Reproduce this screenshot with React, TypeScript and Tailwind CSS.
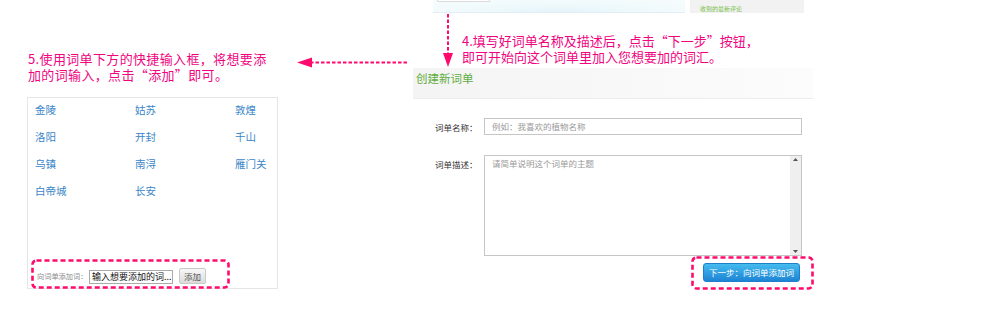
import React from "react";

const F = { fontFamily: '"Noto Sans CJK SC", "Noto Sans", sans-serif' };

function DashBox({ w, h, className }: { w: number; h: number; className: string }) {
  return (
    <svg className={className} width={w} height={h} viewBox={`0 0 ${w} ${h}`}>
      <rect
        x={1.5}
        y={1.5}
        width={w - 3}
        height={h - 3}
        rx={4}
        fill="none"
        stroke="#ff0a6c"
        strokeWidth={2.6}
        strokeDasharray="5 3"
      />
    </svg>
  );
}

const words = ["金陵", "姑苏", "敦煌", "洛阳", "开封", "千山", "乌镇", "南浔", "雁门关", "白帝城", "长安"];

export default function App() {
  return (
    <div className="relative w-[990px] h-[311px] bg-white overflow-hidden flex" style={F}>
      {/* Left column */}
      <div className="ml-[27px] w-[251px] flex flex-col">
        <div className="mt-[51px] pl-[1px] text-[13px] leading-[16px] tracking-[0.35px] text-[#f0047f] whitespace-nowrap">
          <div>5.使用词单下方的快捷输入框，将想要添</div>
          <div>加的词输入，点击“添加”即可。</div>
        </div>
        <div className="relative mt-[14px] h-[192px] border border-[#e6e6e6] flex flex-col">
          <div className="grid grid-cols-[100px_100px_50px] pl-[7px] pt-[3px]">
            {words.map((w) => (
              <div key={w} className="h-[27px] text-[10.5px] leading-[18px] text-[#3a86c8] whitespace-nowrap">
                {w}
              </div>
            ))}
          </div>
          <div className="mt-auto mb-[4px] ml-[9px] flex items-center h-[16px]">
            <span className="w-[52px] text-[7.2px] leading-[10px] text-[#8a8a8a] whitespace-nowrap">向词单添加词：</span>
            <div className="w-[84px] h-[14px] mt-[1px] border border-[#a9a9a9] bg-white px-[2px] text-[9px] leading-[12px] text-[#111] whitespace-nowrap overflow-hidden">
              输入想要添加的词...
            </div>
            <div className="ml-[6px] w-[27px] h-[16px] rounded-[2px] border border-[#c9c9c9] bg-gradient-to-b from-[#f7f7f7] to-[#dcdcdc] text-[8.5px] leading-[14px] text-[#555] text-center whitespace-nowrap">
              添加
            </div>
          </div>
          <DashBox w={199} h={30} className="absolute left-[3px] top-[161px]" />
        </div>
      </div>

      {/* Right column */}
      <div className="ml-[135px] w-[400px] flex flex-col">
        {/* top strip of previous screenshot */}
        <div className="ml-[20px] w-[371px] h-[13px] flex">
          <div className="relative w-[252px] h-[13px] border-b border-[#e3eef2] bg-[radial-gradient(ellipse_at_50%_120%,#dff3fa_0%,#eef9fc_45%,#f7fcfd_100%)]">
            <div className="absolute left-[4px] top-0 w-[53px] h-[2px] bg-white border-b border-x border-[#dcdcdc] rounded-b-[1px]" />
          </div>
          <div className="ml-[5px] w-[114px] h-[13px] bg-[#f2f2f2] pl-[10px] pt-[5px]">
            <div className="text-[6px] leading-[7px] text-[#78c04a] whitespace-nowrap">收到的最新评论</div>
          </div>
        </div>

        <div className="mt-[20px] ml-[49px] text-[13px] leading-[16px] text-[#f0047f] whitespace-nowrap">
          <div>4.填写好词单名称及描述后，点击“下一步”按钮，</div>
          <div>即可开始向这个词单里加入您想要加的词汇。</div>
        </div>

        {/* header */}
        <div className="mt-[3px] h-[31px] border-b border-[#ececec] bg-gradient-to-r from-[#f4f4f4] via-[#f8f8f8] to-[#fcfcfc] pl-[3px] pt-[3px]">
          <div className="text-[11.5px] leading-[14px] text-[#62ad3f]">创建新词单</div>
        </div>

        {/* form */}
        <div className="mt-[19px] ml-[22px] flex items-center">
          <div className="w-[49px] text-[8.5px] leading-[10px] text-[#333] whitespace-nowrap">词单名称：</div>
          <div className="w-[318px] h-[17px] border border-[#c6c6c6] bg-white pl-[7px] text-[8.5px] leading-[15px] text-[#9a9a9a]">
            例如：我喜欢的植物名称
          </div>
        </div>

        <div className="mt-[20px] ml-[22px] flex items-start">
          <div className="w-[49px] pt-[4px] text-[8.5px] leading-[10px] text-[#333] whitespace-nowrap">词单描述：</div>
          <div className="w-[318px] h-[101px] border border-[#c6c6c6] bg-white flex">
            <div className="flex-1 pl-[7px] pt-[2px] text-[8.5px] leading-[11px] text-[#9a9a9a]">
              请简单说明这个词单的主题
            </div>
            <div className="w-[11px] bg-[#efefef] flex flex-col items-center justify-between py-[2px]">
              <svg width="5" height="3" viewBox="0 0 5 3">
                <polygon points="2.5,0 5,3 0,3" fill="#555" />
              </svg>
              <svg width="5" height="3" viewBox="0 0 5 3">
                <polygon points="0,0 5,0 2.5,3" fill="#555" />
              </svg>
            </div>
          </div>
        </div>

        <div className="relative mt-[7px] ml-[290px] w-[97px]">
          <div className="h-[19px] rounded-[3px] border border-[#1f7fca] bg-gradient-to-b from-[#45bbef] to-[#1d84d4] text-[8.5px] leading-[17px] text-white text-center whitespace-nowrap">
            下一步：向词单添加词
          </div>
          <DashBox w={123} h={34} className="absolute left-[-12px] top-[-7px]" />
        </div>
      </div>

      {/* vertical arrow */}
      <svg className="absolute left-[440px] top-[13px]" width="16" height="56" viewBox="0 0 16 56">
        <line x1="8" y1="1" x2="8" y2="42" stroke="#ff0a6c" strokeWidth="2" strokeDasharray="3.5 2" />
        <polygon points="3,40 13,40 8,54" fill="#ff0a6c" />
      </svg>

      {/* horizontal arrow */}
      <svg className="absolute left-[295px] top-[55px]" width="114" height="14" viewBox="0 0 114 14">
        <line x1="15" y1="7.5" x2="112" y2="7.5" stroke="#ff0a6c" strokeWidth="2" strokeDasharray="3.5 2" />
        <polygon points="2,7.5 17,2.5 17,12.5" fill="#ff0a6c" />
      </svg>
    </div>
  );
}
